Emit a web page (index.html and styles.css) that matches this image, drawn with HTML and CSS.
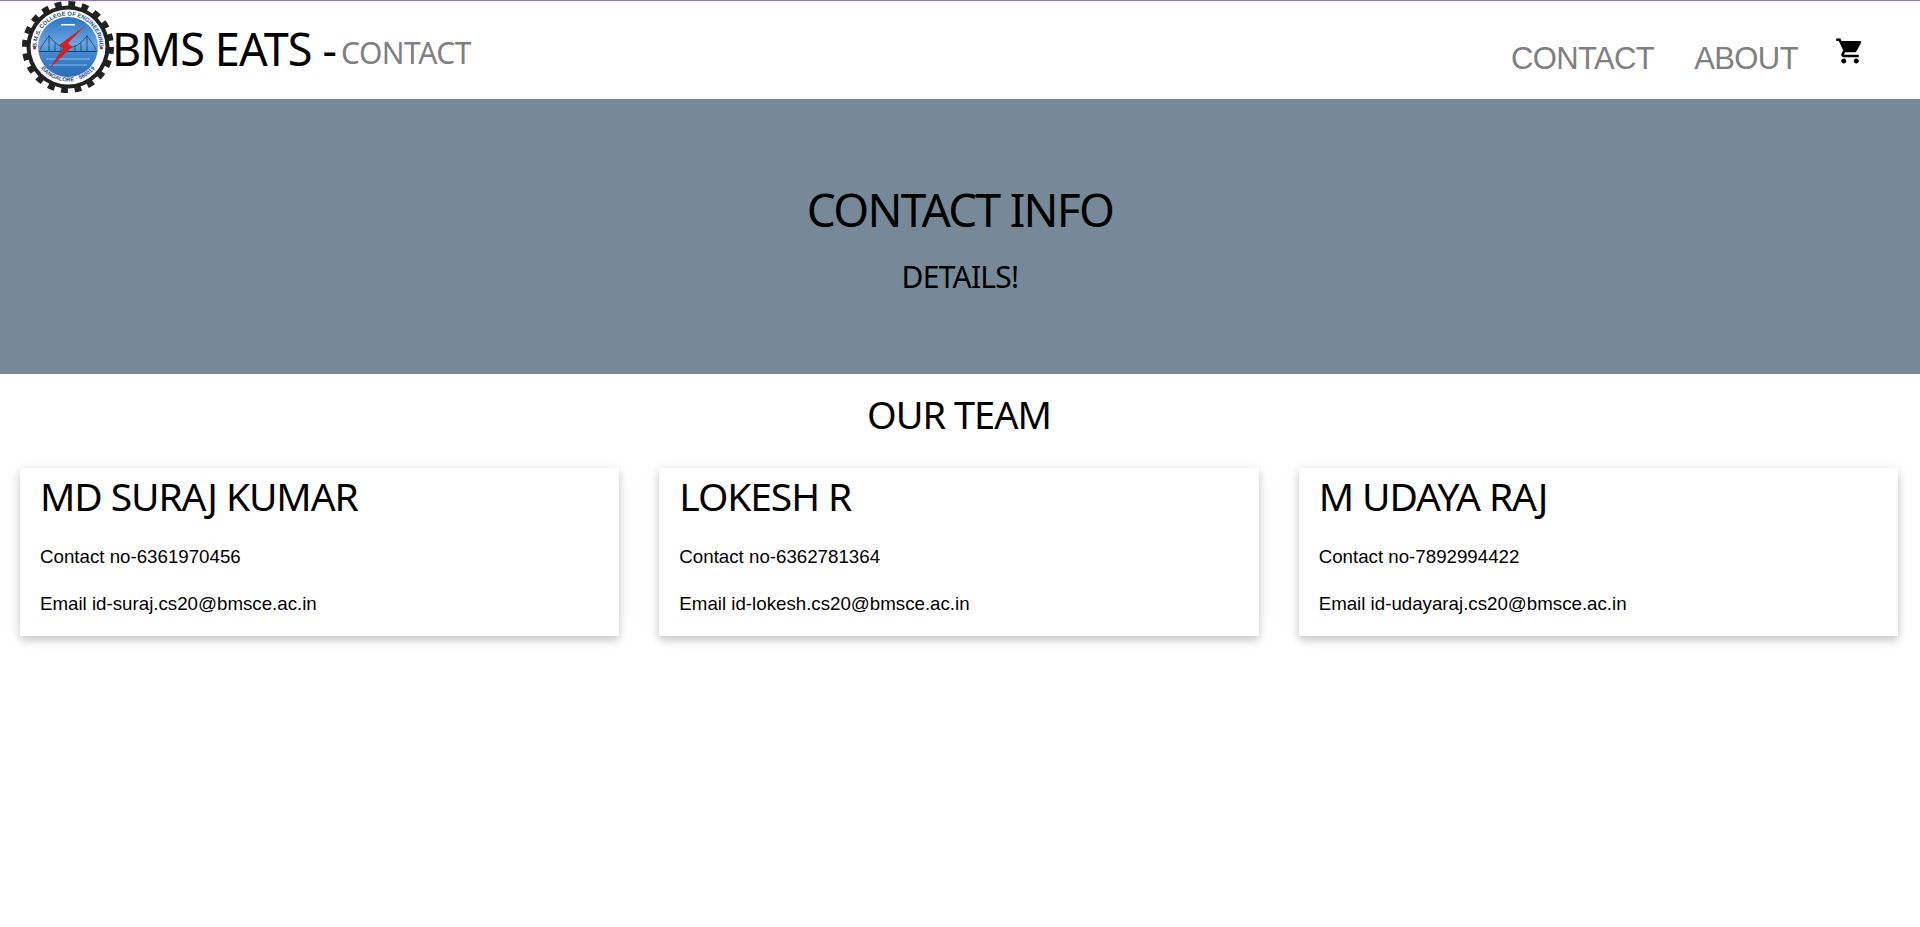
FILE: index.html
```html
<!DOCTYPE html>
<html lang="en">
<head>
<meta charset="utf-8">
<title>BMS EATS - CONTACT</title>
<link rel="stylesheet" href="styles.css">
</head>
<body>
<header class="topbar">
  <div class="brand">
    <svg class="logo" viewBox="0 0 92 92" aria-label="B.M.S. College of Engineering logo">
      <defs>
        <linearGradient id="sky" x1="0" y1="0" x2="0" y2="1">
          <stop offset="0" stop-color="#2b74c6"/>
          <stop offset="0.45" stop-color="#6aa6de"/>
          <stop offset="0.62" stop-color="#3f86cf"/>
          <stop offset="1" stop-color="#2a6cb8"/>
        </linearGradient>
        <path id="arcTop" d="M14.500 46 A31.500 31.500 0 0 1 77.500 46"/>
        <path id="arcBottom" d="M14 58 A34 34 0 0 0 78 58"/>
      </defs>
      <circle cx="46" cy="46" r="41.500" fill="#222"/>
      <circle cx="46" cy="46" r="43" fill="none" stroke="#222" stroke-width="6" stroke-dasharray="6.755 6.755"/>
      <circle cx="46" cy="46" r="37.500" fill="#fff"/>
      <circle cx="46" cy="46" r="30" fill="url(#sky)"/>
      <path d="M17 50.500 H75" stroke="#123f77" stroke-width="1.200"/>
      <path d="M27 34 V50 M65 34 V50 M27 35 Q37 48 46 46 M65 35 Q55 48 46 46 M27 35 Q20 44 18 49 M65 35 Q72 44 74 49 M33 42 V50 M39 45 V50 M53 45 V50 M59 42 V50" fill="none" stroke="#103f74" stroke-width=".8"/>
      <path d="M24 58 H68 M27 64 H65" stroke="#8ebce8" stroke-width="1.200"/>
      <path d="M64 24 L46 42 L50 46 L27 68 L41 47 L37 44Z" fill="#d4211e"/>
      <rect x="39" y="23" width="14" height="1.500" fill="#fff"/>
      <circle cx="12.500" cy="47" r="1.500" fill="#c8201c"/>
      <circle cx="79.500" cy="47" r="1.500" fill="#c8201c"/>
      <text class="logo-text"><textPath href="#arcTop" startOffset="50%" text-anchor="middle">B.M.S. COLLEGE OF ENGINEERING</textPath></text>
      <text class="logo-text"><textPath href="#arcBottom" startOffset="50%" text-anchor="middle">BANGALORE - 560019</textPath></text>
    </svg>
    <h1 class="brand-title">BMS EATS -<span class="brand-page">CONTACT</span></h1>
  </div>
  <nav class="nav">
    <a class="nav-link" href="#">CONTACT</a>
    <a class="nav-link" href="#">ABOUT</a>
    <a class="cart" href="#" aria-label="Cart">
      <svg viewBox="0 0 24 24" class="cart-icon"><path d="M7 18c-1.100 0-1.990.9-1.990 2S5.900 22 7 22s2-.9 2-2-.9-2-2-2zM1 2v2h2l3.600 7.590-1.350 2.450c-.16.280-.25.610-.25.960 0 1.100.9 2 2 2h12v-2H7.420c-.14 0-.25-.11-.25-.25l.03-.12.9-1.630h7.450c.75 0 1.410-.41 1.750-1.030l3.580-6.490c.08-.14.12-.31.12-.48 0-.55-.45-1-1-1H5.210l-.94-2H1zm16 16c-1.100 0-1.990.9-1.990 2s.89 2 1.990 2 2-.9 2-2-.9-2-2-2z"/></svg>
    </a>
  </nav>
</header>

<section class="hero">
  <h2 class="hero-title">CONTACT INFO</h2>
  <p class="hero-sub">DETAILS!</p>
</section>

<main class="team">
  <h2 class="team-title">OUR TEAM</h2>
  <div class="cards">
    <article class="card">
      <h3 class="card-name">MD SURAJ KUMAR</h3>
      <p class="card-line">Contact no-6361970456</p>
      <p class="card-line">Email id-suraj.cs20@bmsce.ac.in</p>
    </article>
    <article class="card">
      <h3 class="card-name">LOKESH R</h3>
      <p class="card-line">Contact no-6362781364</p>
      <p class="card-line">Email id-lokesh.cs20@bmsce.ac.in</p>
    </article>
    <article class="card">
      <h3 class="card-name">M UDAYA RAJ</h3>
      <p class="card-line">Contact no-7892994422</p>
      <p class="card-line">Email id-udayaraj.cs20@bmsce.ac.in</p>
    </article>
  </div>
</main>
</body>
</html>
```
FILE: styles.css
```css
* { box-sizing: border-box; }
html, body { margin: 0; padding: 0; }
body {
  background: #fff;
  color: #000;
  font-family: "Liberation Sans", Arial, sans-serif;
  min-height: 927px;
}
.topbar {
  height: 99px;
  border-top: 1px solid #9b6fc4;
  display: flex;
  justify-content: space-between;
  padding-left: 22px;
}
.brand { display: flex; align-items: flex-start; }
.logo { width: 92px; height: 92px; flex: none; display: block; margin-right: -2px; }
.logo-text { font: 700 5.800px "Liberation Sans", sans-serif; fill: #1f4f92; }
.brand-title {
  margin: 16px 0 0;
  font: 400 45px/1.4 "Noto Sans", sans-serif;
  letter-spacing: -.9px;
  white-space: nowrap;
}
.brand-page { font-size: 30px; color: #808080; letter-spacing: -.5px; vertical-align: 2px; margin-left: 5px; }
.nav { display: flex; align-items: flex-start; padding-right: 55px; }
.nav-link {
  margin: 38px 40px 0 0;
  color: #808080;
  font-size: 31px;
  letter-spacing: -.6px;
  line-height: 40px;
  text-decoration: none;
}
.nav-link + .nav-link { margin-right: 37px; }
.cart { display: block; margin-top: 35px; color: #000; }
.cart-icon { display: block; width: 30px; height: 30px; fill: currentColor; }
.hero {
  height: 275px;
  background: #778899;
  text-align: center;
  padding-top: 80px;
}
.hero-title { margin: 0; font: 400 46px/60px "Noto Sans", sans-serif; letter-spacing: -1.7px; }
.hero-sub { margin: 20px 0 0; font: 400 30px/36px "Noto Sans", sans-serif; letter-spacing: -.75px; }
.team { padding: 0 22px 0 20px; }
.team-title { margin: 15px 0 0; text-align: center; font: 400 38px/50px "Noto Sans", sans-serif; letter-spacing: -1px; }
.cards { display: grid; grid-template-columns: repeat(3, 1fr); gap: 40px; margin-top: 29px; }
.card {
  height: 168px;
  padding: 0 20px;
  box-shadow: 0 4px 8px rgba(0, 0, 0, .2), 0 2px 20px rgba(0, 0, 0, .05);
  background: #fff;
}
.card-name { margin: 0 0 20px; font: 400 39px/56px "Noto Sans", sans-serif; letter-spacing: -1.1px; }
.card-line { margin: 0 0 21px; font-size: 18.720px; line-height: 26px; }
```
